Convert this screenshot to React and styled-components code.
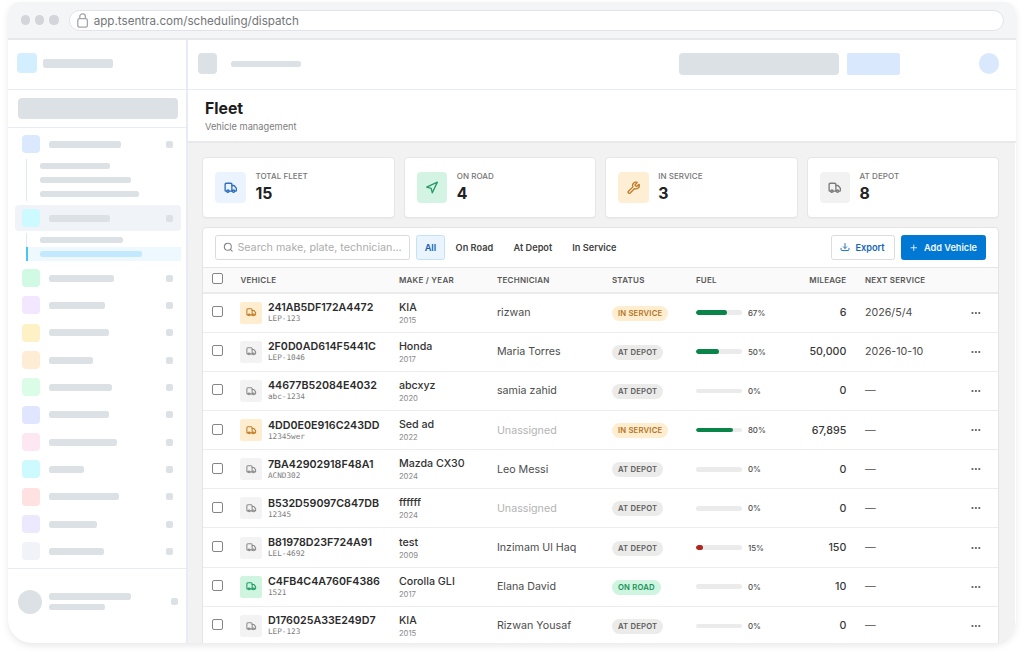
import React from 'react';
import styled, { createGlobalStyle } from 'styled-components';
import { Truck, Navigation, Wrench, Search, Plus } from 'lucide-react';

const navItems = [
    { color: '#dbe9fe', width: 72, height: 28, subs: [70, 90.5, 98.5] },
    { color: '#cdfafe', width: 61, height: 26, active: true, subs: [83, 101.5], selected: 1 },
    { color: '#d0fae4', width: 65 },
    { color: '#f3e7ff', width: 56 },
    { color: '#fef1c6', width: 60 },
    { color: '#ffecd5', width: 44 },
    { color: '#dbfce6', width: 63 },
    { color: '#e0e6ff', width: 60 },
    { color: '#fce7f3', width: 67.5 },
    { color: '#cdfafe', width: 35 },
    { color: '#ffe1e1', width: 70 },
    { color: '#ece8fe', width: 48 },
    { color: '#f0f4f8', width: 55 },
];

const stats = [
    { label: 'TOTAL FLEET', value: 15, icon: Truck, bg: '#ebf4fe', color: '#2f6fbb' },
    { label: 'ON ROAD', value: 4, icon: Navigation, bg: '#d3f4e3', color: '#2a9a68' },
    { label: 'IN SERVICE', value: 3, icon: Wrench, bg: '#feefd4', color: '#c07d2b' },
    { label: 'AT DEPOT', value: 8, icon: Truck, bg: '#f2f2f2', color: '#7d7d7d' },
];

const statusColors = {
    'IN SERVICE': { bg: '#feedcf', color: '#b3741f', tile: '#feedcf', icon: '#c27c28' },
    'AT DEPOT': { bg: '#ebebea', color: '#5c5c5c', tile: '#f3f3f3', icon: '#8c8c8c' },
    'ON ROAD': { bg: '#cff4e0', color: '#159257', tile: '#cff4e0', icon: '#1f9a62' },
};

const vehicles = [
    { vin: '241AB5DF172A4472', plate: 'LEP-123', make: 'KIA', year: 2015, tech: 'rizwan', status: 'IN SERVICE', fuel: 67, mileage: '6', next: '2026/5/4' },
    { vin: '2F0D0AD614F5441C', plate: 'LEP-1046', make: 'Honda', year: 2017, tech: 'Maria Torres', status: 'AT DEPOT', fuel: 50, mileage: '50,000', next: '2026-10-10' },
    { vin: '44677B52084E4032', plate: 'abc-1234', make: 'abcxyz', year: 2020, tech: 'samia zahid', status: 'AT DEPOT', fuel: 0, mileage: '0', next: '—' },
    { vin: '4DD0E0E916C243DD', plate: '12345wer', make: 'Sed ad', year: 2022, tech: null, status: 'IN SERVICE', fuel: 80, mileage: '67,895', next: '—' },
    { vin: '7BA42902918F48A1', plate: 'ACND302', make: 'Mazda CX30', year: 2024, tech: 'Leo Messi', status: 'AT DEPOT', fuel: 0, mileage: '0', next: '—' },
    { vin: 'B532D59097C847DB', plate: '12345', make: 'ffffff', year: 2024, tech: null, status: 'AT DEPOT', fuel: 0, mileage: '0', next: '—' },
    { vin: 'B81978D23F724A91', plate: 'LEL-4692', make: 'test', year: 2009, tech: 'Inzimam Ul Haq', status: 'AT DEPOT', fuel: 15, mileage: '150', next: '—' },
    { vin: 'C4FB4C4A760F4386', plate: '1521', make: 'Corolla GLI', year: 2017, tech: 'Elana David', status: 'ON ROAD', fuel: 0, mileage: '10', next: '—' },
    { vin: 'D176025A33E249D7', plate: 'LEP-123', make: 'KIA', year: 2015, tech: 'Rizwan Yousaf', status: 'AT DEPOT', fuel: 0, mileage: '0', next: '—' },
];

function NavGroup({ item }) {
    return (
        <>
            <NavRow $height={item.height} $active={item.active}>
                <NavTile $color={item.color} />
                <Bar $w={item.width} $h={7} />
                <Dot />
            </NavRow>
            {item.subs && (
                <SubList $last={item.active}>
                    {item.subs.map((w, i) => (
                        <SubRow key={w} $selected={item.selected === i}>
                            <Bar $w={w} $h={5.5} $color={item.selected === i ? '#c3e9fe' : undefined} />
                        </SubRow>
                    ))}
                </SubList>
            )}
        </>
    );
}

function VehicleRow({ vehicle }) {
    const colors = statusColors[vehicle.status];
    return (
        <Row>
            <Check />
            <Vehicle>
                <VehicleTile $bg={colors.tile} $color={colors.icon}>
                    <Truck size={10.5} strokeWidth={2.4} />
                </VehicleTile>
                <div>
                    <Vin>{vehicle.vin}</Vin>
                    <Plate>{vehicle.plate}</Plate>
                </div>
            </Vehicle>
            <MakeYear>
                <Make>{vehicle.make}</Make>
                <Year>{vehicle.year}</Year>
            </MakeYear>
            <Technician $empty={!vehicle.tech}>{vehicle.tech || 'Unassigned'}</Technician>
            <Status>
                <Badge $bg={colors.bg} $color={colors.color}>{vehicle.status}</Badge>
            </Status>
            <Fuel>
                <FuelTrack>
                    <FuelFill $low={vehicle.fuel < 25} style={{ width: `${vehicle.fuel}%` }} />
                </FuelTrack>
                <FuelText>{vehicle.fuel}%</FuelText>
            </Fuel>
            <Mileage>{vehicle.mileage}</Mileage>
            <NextService>{vehicle.next}</NextService>
            <More>
                <svg width="10" height="4" viewBox="0 0 10 4" fill="#5c5c5c">
                    <circle cx="1.5" cy="2" r="1.1" />
                    <circle cx="4.9" cy="2" r="1.1" />
                    <circle cx="8.3" cy="2" r="1.1" />
                </svg>
            </More>
        </Row>
    );
}

function App() {
    return (
        <>
            <GlobalStyle />
            <Window>
                <Chrome>
                    <Lights>
                        <span />
                        <span />
                        <span />
                    </Lights>
                    <Address>
                        <svg width="12" height="16" viewBox="0 0 12 16" fill="none" stroke="#a2a5ab" strokeWidth="1.3">
                            <rect x="0.8" y="5.6" width="9.6" height="8.6" rx="1.8" />
                            <path d="M2.8 5.6V3.6a2.8 2.8 0 0 1 5.6 0V5.6" />
                        </svg>
                        <span>app.tsentra.com/scheduling/dispatch</span>
                    </Address>
                </Chrome>
                <Body>
                    <Sidebar>
                        <Brand>
                            <Block $w={19.5} $h={19.5} $r={4} $color="#d2eeff" />
                            <Block $w={70} $h={9} $r={2.5} />
                        </Brand>
                        <SideSearch>
                            <Block $w={160} $h={21} $r={4} />
                        </SideSearch>
                        <Nav>
                            {navItems.map((item, i) => <NavGroup key={i} item={item} />)}
                        </Nav>
                        <Profile>
                            <Block $w={24} $h={24} $r={12} />
                            <ProfileText>
                                <Bar $w={81.5} $h={7} />
                                <Bar $w={55.5} $h={5.5} />
                            </ProfileText>
                            <Dot />
                        </Profile>
                    </Sidebar>
                    <Main>
                        <TopBar>
                            <Block $w={19} $h={20.5} $r={4} />
                            <TopTitle><Bar $w={70} $h={6} /></TopTitle>
                            <TopSearch><Block $w={160} $h={22} $r={4} /></TopSearch>
                            <TopAction><Block $w={52.5} $h={22} $r={2} $color="#dae8fe" /></TopAction>
                            <TopAvatar><Block $w={19.5} $h={20.5} $r={11} $color="#dae8fe" /></TopAvatar>
                        </TopBar>
                        <PageHead>
                            <h1>Fleet</h1>
                            <p>Vehicle management</p>
                        </PageHead>
                        <Content>
                            <Stats>
                                {stats.map(({ label, value, icon: Icon, bg, color }) => (
                                    <Stat key={label}>
                                        <StatIcon $bg={bg} $color={color}>
                                            <Icon size={13.5} strokeWidth={2.4} />
                                        </StatIcon>
                                        <div>
                                            <StatLabel>{label}</StatLabel>
                                            <StatValue>{value}</StatValue>
                                        </div>
                                    </Stat>
                                ))}
                            </Stats>
                            <Panel>
                                <Toolbar>
                                    <SearchBox>
                                        <Search size={10.5} strokeWidth={2.4} color="#858585" />
                                        <span>Search make, plate, technician...</span>
                                    </SearchBox>
                                    <Filter $w={29} $active>All</Filter>
                                    <Filter $w={49}>On Road</Filter>
                                    <Filter $w={50}>At Depot</Filter>
                                    <Filter $w={55}>In Service</Filter>
                                    <Actions>
                                        <Button $w={64}>
                                            <svg width="10" height="10" viewBox="0 0 24 24" fill="none" stroke="currentColor" strokeWidth="2.2" strokeLinecap="round" strokeLinejoin="round">
                                                <path d="M2.5 15v3.5a2 2 0 0 0 2 2h15a2 2 0 0 0 2-2V15" />
                                                <path d="M12 3.5v11.5" />
                                                <path d="m8 11.5 4 4 4-4" />
                                            </svg>
                                            Export
                                        </Button>
                                        <Button $w={85.5} $primary>
                                            <Plus size={9.5} strokeWidth={2.2} />
                                            Add Vehicle
                                        </Button>
                                    </Actions>
                                </Toolbar>
                                <TableHead>
                                    <Check />
                                    <span>VEHICLE</span>
                                    <span>MAKE / YEAR</span>
                                    <span>TECHNICIAN</span>
                                    <span>STATUS</span>
                                    <span>FUEL</span>
                                    <HeadRight>MILEAGE</HeadRight>
                                    <HeadNext>NEXT SERVICE</HeadNext>
                                </TableHead>
                                {vehicles.map((vehicle) => <VehicleRow key={vehicle.vin} vehicle={vehicle} />)}
                            </Panel>
                        </Content>
                    </Main>
                </Body>
            </Window>
        </>
    );
}

export default App;

const GlobalStyle = createGlobalStyle`
* {
    box-sizing: border-box;
}

body {
    margin: 0;
    height: 658px;
    overflow: hidden;
    background: #fff;
    color: #2b2b2b;
    font-family: Inter, "Liberation Sans", sans-serif;
}
`

const Window = styled.div`
    display: flex;
    flex-direction: column;
    width: 1008px;
    height: 641px;
    margin: 2px 0 0 8px;
    overflow: hidden;
    background: #fff;
    border-radius: 12px 12px 24px 24px;
    box-shadow: 0 3px 7px rgba(0, 0, 0, 0.09);
`

const Chrome = styled.div`
    flex: none;
    display: flex;
    align-items: center;
    height: 38px;
    padding: 0 12px 0 12.5px;
    background: #f4f5f7;
    border-bottom: 2px solid #e8e9ed;
`

const Lights = styled.div`
    display: flex;
    gap: 5.3px;
    margin-right: 10px;

    span {
        width: 9.2px;
        height: 9.2px;
        border-radius: 50%;
        background: #d3d5da;
    }
`

const Address = styled.div`
    flex: 1;
    display: flex;
    align-items: center;
    gap: 5px;
    height: 21px;
    margin-top: 1px;
    padding-left: 7px;
    background: #fff;
    border: 1px solid #e1e3e7;
    border-radius: 11px;
    color: #747679;
    font-size: 11.65px;

    span {
        padding-top: 1px;
    }
`

const Body = styled.div`
    flex: 1;
    display: flex;
    min-height: 0;
`

const Sidebar = styled.div`
    flex: none;
    display: flex;
    flex-direction: column;
    width: 180px;
    border-right: 2px solid #e8ebf5;
`

const Block = styled.div`
    flex: none;
    width: ${(p) => p.$w}px;
    height: ${(p) => p.$h}px;
    border-radius: ${(p) => p.$r}px;
    background: ${(p) => p.$color || '#dce1e5'};
`

const Bar = styled(Block)`
    border-radius: 2.5px;
`

const Dot = styled.div`
    width: 7px;
    height: 7px;
    margin-left: auto;
    border-radius: 2px;
    background: #dce1e5;
`

const Brand = styled.div`
    display: flex;
    align-items: center;
    gap: 6.8px;
    height: 50px;
    padding: 0 0 3px 9.2px;
    border-bottom: 1.5px solid #e6ecf3;
`

const SideSearch = styled.div`
    display: flex;
    align-items: center;
    height: 38px;
    padding-left: 9.7px;
    border-bottom: 1.5px solid #e6ecf3;
`

const Nav = styled.div`
    padding: 2px 5px 0 7px;
    height: 440px;
`

const NavRow = styled.div`
    display: flex;
    align-items: center;
    gap: 9px;
    height: ${(p) => p.$height || 27.34}px;
    padding: 0 8px 0 7px;
    border-radius: 4px;
    background: ${(p) => (p.$active ? '#f0f3f8' : 'transparent')};
`

const NavTile = styled.div`
    width: 18px;
    height: 18px;
    border-radius: 4px;
    background: ${(p) => p.$color};
`

const SubList = styled.div`
    margin: ${(p) => (p.$last ? '2px 0 3.5px 11px' : '1px 0 4px 11px')};
    border-left: 1px solid #e2e8f0;
`

const SubRow = styled.div`
    display: flex;
    align-items: center;
    height: 14px;
    margin-left: -1px;
    padding-left: ${(p) => (p.$selected ? 12 : 14)}px;
    background: ${(p) => (p.$selected ? '#edf8ff' : 'transparent')};
    border-left: ${(p) => (p.$selected ? '2px solid #4cc3f5' : '0')};
`

const Profile = styled.div`
    flex: 1;
    display: flex;
    align-items: center;
    gap: 7px;
    padding: 0 8px 9px 10px;
    border-top: 1.5px solid #e6ecf3;
`

const ProfileText = styled.div`
    display: flex;
    flex-direction: column;
    gap: 4px;
`

const Main = styled.div`
    flex: 1;
    display: flex;
    flex-direction: column;
    min-width: 0;
`

const TopBar = styled.div`
    flex: none;
    display: flex;
    align-items: center;
    height: 50px;
    padding: 0 17.5px 2px 9.5px;
    border-bottom: 1.5px solid #e6ecf3;
`

const TopTitle = styled.div`
    margin-left: 14.5px;
`

const TopSearch = styled.div`
    margin: 1px 8px 0 auto;
`

const TopAction = styled.div`
    margin-top: 1px;
`

const TopAvatar = styled.div`
    margin-left: 79.5px;
`

const PageHead = styled.div`
    flex: none;
    height: 53px;
    padding: 9px 0 0 17px;
    border-bottom: 2px solid #e9e9e9;

    h1 {
        margin: 0;
        font-size: 15.8px;
        line-height: 20px;
        font-weight: 700;
        color: #1d1d1d;
    }

    p {
        margin: 1.5px 0 0;
        font-size: 9.25px;
        line-height: 12px;
        color: #7d7d7d;
    }
`

const Content = styled.div`
    flex: 1;
    min-height: 0;
    margin-right: 1.5px;
    padding: 14px 15.5px 0 14.4px;
    background: #f2f2f2;
`

const Stats = styled.div`
    display: grid;
    grid-template-columns: repeat(4, 1fr);
    gap: 9px;
`

const Stat = styled.div`
    display: flex;
    align-items: center;
    gap: 9.5px;
    height: 61px;
    padding-left: 12px;
    background: #fff;
    border: 1px solid #e6e6e6;
    border-radius: 4px;
    box-shadow: 0 1px 1px rgba(0, 0, 0, 0.03);
`

const StatIcon = styled.div`
    display: flex;
    align-items: center;
    justify-content: center;
    width: 30.5px;
    height: 30.5px;
    border-radius: 4px;
    background: ${(p) => p.$bg};
    color: ${(p) => p.$color};
`

const StatLabel = styled.div`
    font-size: 8px;
    line-height: 11px;
    letter-spacing: 0.05px;
    font-weight: 500;
    color: #757575;
`

const StatValue = styled.div`
    margin-top: 2px;
    padding-bottom: 1px;
    font-size: 15.8px;
    line-height: 20px;
    font-weight: 700;
    color: #222;
`

const Panel = styled.div`
    height: 440px;
    margin-top: 8.5px;
    background: #fff;
    border: 1px solid #e4e4e4;
    border-radius: 4px;
`

const Toolbar = styled.div`
    display: flex;
    align-items: center;
    height: 39.5px;
    padding: 0 12px 0 11.5px;
`

const SearchBox = styled.div`
    display: flex;
    align-items: center;
    gap: 4px;
    width: 195px;
    height: 25px;
    margin-right: 6px;
    padding-left: 7px;
    border: 1px solid #dadada;
    border-radius: 2.5px;
    color: #adadad;
    font-size: 10.72px;
    white-space: nowrap;

    span {
        padding-top: 1px;
    }
`

const Filter = styled.div`
    display: flex;
    align-items: center;
    justify-content: center;
    width: ${(p) => p.$w}px;
    height: 25px;
    margin-right: ${(p) => (p.$active ? 5 : 9)}px;
    border: 1px solid ${(p) => (p.$active ? '#c4e1fb' : 'transparent')};
    border-radius: 2.5px;
    background: ${(p) => (p.$active ? '#eaf4fe' : 'transparent')};
    color: ${(p) => (p.$active ? '#1663b5' : '#424242')};
    font-size: 9.2px;
    font-weight: 600;
    white-space: nowrap;
`

const Actions = styled.div`
    display: flex;
    gap: 6px;
    margin-left: auto;
`

const Button = styled.div`
    display: flex;
    align-items: center;
    justify-content: center;
    gap: 5px;
    width: ${(p) => p.$w}px;
    height: 25px;
    border: 1px solid ${(p) => (p.$primary ? '#0278d5' : '#dcdcdc')};
    border-radius: 2.5px;
    background: ${(p) => (p.$primary ? '#0278d5' : '#fff')};
    color: ${(p) => (p.$primary ? '#f2f8fd' : '#1467b8')};
    font-size: 9.2px;
    font-weight: 600;
    white-space: nowrap;
`

const Row = styled.div`
    display: grid;
    grid-template-columns: 37px 158.5px 98px 115px 84px 80px 70.5px 125px 1fr;
    align-items: center;
    height: 39.17px;
    border-bottom: 1px solid #ededed;
`

const TableHead = styled(Row)`
    height: 26.5px;
    background: #fafafa;
    border-top: 1px solid #e6e6e6;
    border-bottom: 2px solid #ebebeb;
    color: #575757;
    font-size: 8px;
    font-weight: 600;
    letter-spacing: 0.25px;
`

const HeadRight = styled.div`
    text-align: right;
`

const HeadNext = styled.div`
    padding-left: 18.5px;
`

const Check = styled.div`
    width: 11px;
    height: 11px;
    margin: 0 0 2px 8.5px;
    border: 1px solid #858585;
    border-radius: 2px;
    background: #fff;
`

const Vehicle = styled.div`
    display: flex;
    align-items: center;
    gap: 5.5px;
`

const VehicleTile = styled.div`
    display: flex;
    align-items: center;
    justify-content: center;
    width: 22px;
    height: 22px;
    border-radius: 2.5px;
    background: ${(p) => p.$bg};
    color: ${(p) => p.$color};
`

const Vin = styled.div`
    font-size: 10.7px;
    line-height: 13px;
    font-weight: 600;
    color: #2b2b2b;
`

const Plate = styled.div`
    font-family: "DejaVu Sans Mono", monospace;
    font-size: 7.7px;
    line-height: 10px;
    color: #7d7d7d;
`

const MakeYear = styled.div`
    padding-top: 1px;
`

const Make = styled.div`
    font-size: 10.7px;
    line-height: 14px;
    font-weight: 500;
    color: #333;
`

const Year = styled.div`
    font-size: 7.7px;
    line-height: 11px;
    color: #8a8a8a;
`

const Technician = styled.div`
    font-size: 10.7px;
    color: ${(p) => (p.$empty ? '#b3b3b3' : '#4d4d4d')};
`

const Status = styled.div`
    display: flex;
    padding-top: 1px;
`

const Badge = styled.span`
    display: flex;
    align-items: center;
    height: 15px;
    padding: 0 6px;
    border-radius: 8px;
    background: ${(p) => p.$bg};
    color: ${(p) => p.$color};
    font-size: 7.7px;
    font-weight: 600;
    letter-spacing: 0.2px;
`

const Fuel = styled.div`
    display: flex;
    align-items: center;
    gap: 6px;
`

const FuelTrack = styled.div`
    width: 46px;
    height: 4.6px;
    border-radius: 3px;
    background: #ebebeb;
    overflow: hidden;
`

const FuelFill = styled.div`
    height: 100%;
    border-radius: 3px;
    background: ${(p) => (p.$low ? '#b3261e' : '#0a8549')};
`

const FuelText = styled.div`
    font-size: 7.9px;
    font-weight: 500;
    color: #4d4d4d;
`

const Mileage = styled.div`
    text-align: right;
    font-size: 10.7px;
    font-weight: 500;
    color: #383838;
`

const NextService = styled.div`
    padding-left: 18.5px;
    font-size: 10.7px;
    color: #4d4d4d;
`

const More = styled.div`
    display: flex;
`
